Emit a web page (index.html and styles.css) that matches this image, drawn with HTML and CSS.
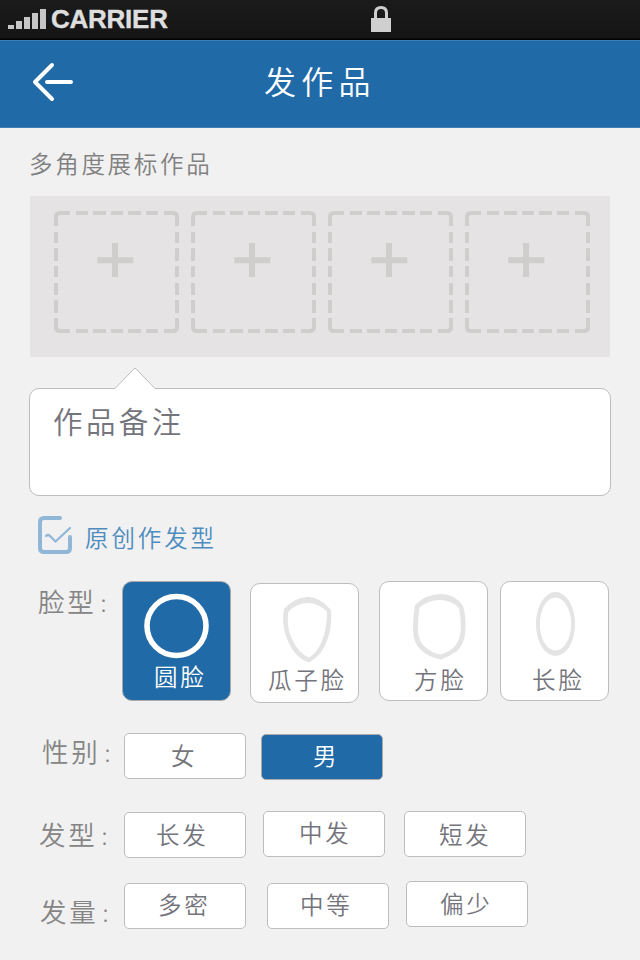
FILE: index.html
```
<!DOCTYPE html>
<html lang="zh-CN">
<head>
<meta charset="utf-8">
<title>发作品</title>
<link rel="stylesheet" href="styles.css">
</head>
<body>
<svg class="defs" aria-hidden="true">
  <symbol id="slot" viewBox="0 0 125 122">
    <path fill="none" stroke="#cfcecc" stroke-width="4" d="M2 15V6Q2 2 6 2H16M22 2H34M39 2H52M57 2H69M74 2H87M92 2H104M110 2H119Q123 2 123 6V15M123 21V32M123 37V50M123 55V66M123 72V84M123 89V102M123 107V116Q123 120 119 120H110M104 120H92M87 120H74M69 120H57M52 120H39M34 120H22M16 120H6Q2 120 2 116V107M2 102V89M2 84V72M2 66V55M2 50V37M2 32V21"/>
    <path fill="none" stroke="#cfcecc" stroke-width="6" d="M61 32V66M43.3 49.3H79.3"/>
  </symbol>
</svg>
<div class="status">
  <svg class="signal" width="38" height="20" viewBox="0 0 38 20"><path fill="#c6c6c6" d="M0 16H6V20H0ZM8 12H14V20H8ZM16 8H22V20H16ZM24 4H30V20H24ZM32 0H38V20H32Z"/></svg>
  <span class="carrier">CARRIER</span>
  <svg class="lock" width="20" height="26" viewBox="0 0 20 26"><path fill="#cfcfcf" d="M0 12H20V26H0Z"/><path fill="none" stroke="#cfcfcf" stroke-width="3" d="M4.500 13V7Q4.500 1.500 10 1.500T15.500 7V13"/></svg>
</div>
<header class="header">
  <svg class="back" width="42" height="40" viewBox="0 0 42 40"><path fill="none" stroke="#fff" stroke-width="4" stroke-linecap="round" stroke-linejoin="round" d="M20 3L3 20L20 37M15 20H39"/></svg>
  <h1 class="title">发作品</h1>
</header>
<main>
  <h2 class="caption">多角度展标作品</h2>
  <div class="panel">
    <svg class="slot"><use href="#slot"/></svg>
    <svg class="slot"><use href="#slot"/></svg>
    <svg class="slot"><use href="#slot"/></svg>
    <svg class="slot"><use href="#slot"/></svg>
  </div>
  <div class="remark">
    <svg class="pointer" width="42" height="23" viewBox="0 0 42 23"><path fill="#fff" d="M1 21.500L21 1L41 21.500V23H1Z"/><path fill="none" stroke="#bdbdbd" d="M1 21.500L20 1.800Q21 .6 22 1.800L41 21.500"/></svg>
    作品备注
  </div>
  <div class="original">
    <svg width="36" height="39" viewBox="0 0 36 39"><path fill="none" stroke="#90b6d8" stroke-width="4" stroke-linecap="round" d="M22 2H6Q2 2 2 6V32Q2 36 6 36H28Q32 36 32 32V21"/><path fill="none" stroke="#90b6d8" stroke-width="2.300" stroke-linecap="round" d="M8 20Q10 18 12 20L17.500 25.500L32 12"/></svg>
    <span>原创作发型</span>
  </div>
  <section class="row faces">
    <div class="label">脸型<i>:</i></div>
    <div class="card selected round">
      <svg width="66" height="66" viewBox="0 0 66 66"><circle cx="33.500" cy="33" r="29.500" fill="none" stroke="#fff" stroke-width="5.600"/></svg>
      <span>圆脸</span>
    </div>
    <div class="card melon">
      <svg width="50" height="66" viewBox="0 0 50 66"><path fill="#e5e4e4" fill-rule="evenodd" d="M2 12Q13 0 26 0Q38 0 49 13Q50 29 46 41Q41 58 27 65.500Q13 61 6 44Q-1 29 2 12ZM6.500 14.500Q15 6 26 6Q36 6 45 14.500Q45 28 42 38Q37 55 27 60.500Q17 57 10 42Q4 29 6.500 14.500Z"/></svg>
      <span>瓜子脸</span>
    </div>
    <div class="card square">
      <svg width="53" height="66" viewBox="0 0 53 66"><path fill="#e5e4e4" fill-rule="evenodd" d="M2 11Q13 0 28 0Q42 0 50 12Q53 22 52.500 35Q52 50 44 57Q37 62 28 65.500Q15 63 8 56Q0 49 0 35Q0 23 2 11ZM6.500 13.500Q15 6 27 6Q38 6 46 14Q48 24 48 35Q47 47 41 53Q36 58 28 60.500Q18 59 11 52Q5 46 5 35Q5 23 6.500 13.500Z"/></svg>
      <span>方脸</span>
    </div>
    <div class="card long">
      <svg width="39" height="64" viewBox="0 0 39 64"><path fill="#e5e4e4" fill-rule="evenodd" d="M19.500 0A19.500 32 0 0 1 19.500 64A19.500 32 0 0 1 19.500 0ZM19.500 5.500A15.700 26.500 0 0 0 19.500 58.500A15.700 26.500 0 0 0 19.500 5.500Z"/></svg>
      <span>长脸</span>
    </div>
  </section>
  <section class="row gender">
    <div class="label">性别<i>:</i></div>
    <div class="option female">女</div>
    <div class="option selected male">男</div>
  </section>
  <section class="row style">
    <div class="label">发型<i>:</i></div>
    <div class="option long-hair">长发</div>
    <div class="option mid-hair">中发</div>
    <div class="option short-hair">短发</div>
  </section>
  <section class="row volume">
    <div class="label">发量<i>:</i></div>
    <div class="option dense">多密</div>
    <div class="option medium">中等</div>
    <div class="option sparse">偏少</div>
  </section>
</main>
</body>
</html>
```
FILE: styles.css
```
* { box-sizing: border-box; }
body {
  margin: 0;
  width: 640px;
  height: 960px;
  overflow: hidden;
  background: #f1f1f1;
  color: #74747c;
  font-family: "Noto Sans CJK SC", sans-serif;
  font-size: 23.5px;
  font-weight: 350;
  letter-spacing: 2.7px;
}
svg { display: block; flex: none; }
.defs { position: absolute; width: 0; height: 0; }

.status {
  display: flex;
  height: 40px;
  padding-left: 8px;
  background: linear-gradient(#1b1b1b, #151515 38px, #030303 39px);
}
.signal { margin-top: 9px; }
.carrier {
  width: 320px;
  margin-left: 5px;
  font: bold 26px/38px "Liberation Sans", sans-serif;
  letter-spacing: -0.25px;
  color: #dedede;
  -webkit-text-stroke: 0.4px #dedede;
}
.lock { margin-top: 6px; }

.header {
  display: flex;
  height: 88px;
  background: #206aa8;
  border-top: 1px solid #3b80b9;
  border-bottom: 1px solid #3b7db5;
}
.back { margin: 21px 0 0 32px; }
.title {
  margin: 0 0 0 190px;
  font-size: 32px;
  font-weight: 350;
  line-height: 78px;
  letter-spacing: 5.3px;
  color: #fff;
}

.caption {
  height: 68px;
  margin: 0;
  padding-left: 29px;
  font-size: 23.5px;
  font-weight: 350;
  line-height: 70px;
  letter-spacing: 2.7px;
  color: #808080;
}
.panel {
  display: flex;
  gap: 12px;
  height: 161px;
  margin: 0 30px;
  padding: 15px 0 0 24px;
  background: #e5e3e4;
}
.slot { width: 125px; height: 122px; }

.remark {
  position: relative;
  height: 108px;
  margin: 31px 29px 0;
  padding-left: 23px;
  background: #fff;
  border: 1px solid #bdbdbd;
  border-radius: 10px;
  font-size: 29.5px;
  line-height: 62px;
  letter-spacing: 3.4px;
}
.pointer { position: absolute; left: 84px; top: -22px; }

.original {
  display: flex;
  height: 85px;
  padding: 20px 0 0 38px;
  line-height: 42px;
  color: #4d8cc0;
}
.original span { margin-left: 11px; letter-spacing: 2.9px; }

.row { display: flex; align-items: flex-start; }
.label {
  flex: none;
  font-size: 26.5px;
  line-height: 39px;
  color: #858585;
}
.label i {
  margin-left: 4px;
  font-size: 24px;
  font-style: normal;
  font-weight: 300;
}

.card {
  display: flex;
  flex: none;
  flex-direction: column;
  width: 109px;
  height: 120px;
  border: 1px solid #bdbdbd;
  border-radius: 10px;
  background: #fff;
}
.card span { line-height: 34px; white-space: nowrap; }
.card.selected, .option.selected {
  background: #206aa8;
  border-color: #aaaaac;
  color: #fff;
}
.option {
  flex: none;
  width: 122px;
  height: 46px;
  border: 1px solid #bdbdbd;
  border-radius: 5px;
  background: #fff;
  line-height: 41px;
}

.faces { height: 152px; padding-left: 38px; }
.faces .label { width: 84px; }
.round svg { margin: 11px 0 0 20px; }
.round span { margin: 0 0 0 31px; }
.melon { margin: 2px 0 0 19px; }
.melon svg { margin: 13px 0 0 31px; }
.melon span { margin: -1px 0 0 17px; }
.square { margin-left: 20px; }
.square svg { margin: 12px 0 0 33px; }
.square span { margin: 2px 0 0 34px; }
.long { margin-left: 12px; }
.long svg { margin: 10px 0 0 35px; }
.long span { margin: 6px 0 0 31px; }

.gender { height: 78px; padding-left: 42px; }
.gender .label { width: 82px; margin-top: -2px; }
.female { padding-left: 46px; line-height: 43px; }
.male { margin: 1px 0 0 15px; padding-left: 51px; }

.style { height: 72px; padding-left: 39px; }
.style .label { width: 85px; margin-top: 3px; }
.long-hair { margin-top: 1px; padding-left: 31px; line-height: 43px; }
.mid-hair { margin-left: 17px; padding-left: 35px; }
.short-hair { margin-left: 19px; padding-left: 34px; line-height: 45px; }

.volume { padding-left: 40px; }
.volume .label { width: 84px; margin-top: 8px; }
.dense { padding-left: 33px; }
.medium { margin-left: 21px; padding-left: 32px; }
.sparse { margin: -2px 0 0 17px; padding-left: 33px; line-height: 43px; }
```
